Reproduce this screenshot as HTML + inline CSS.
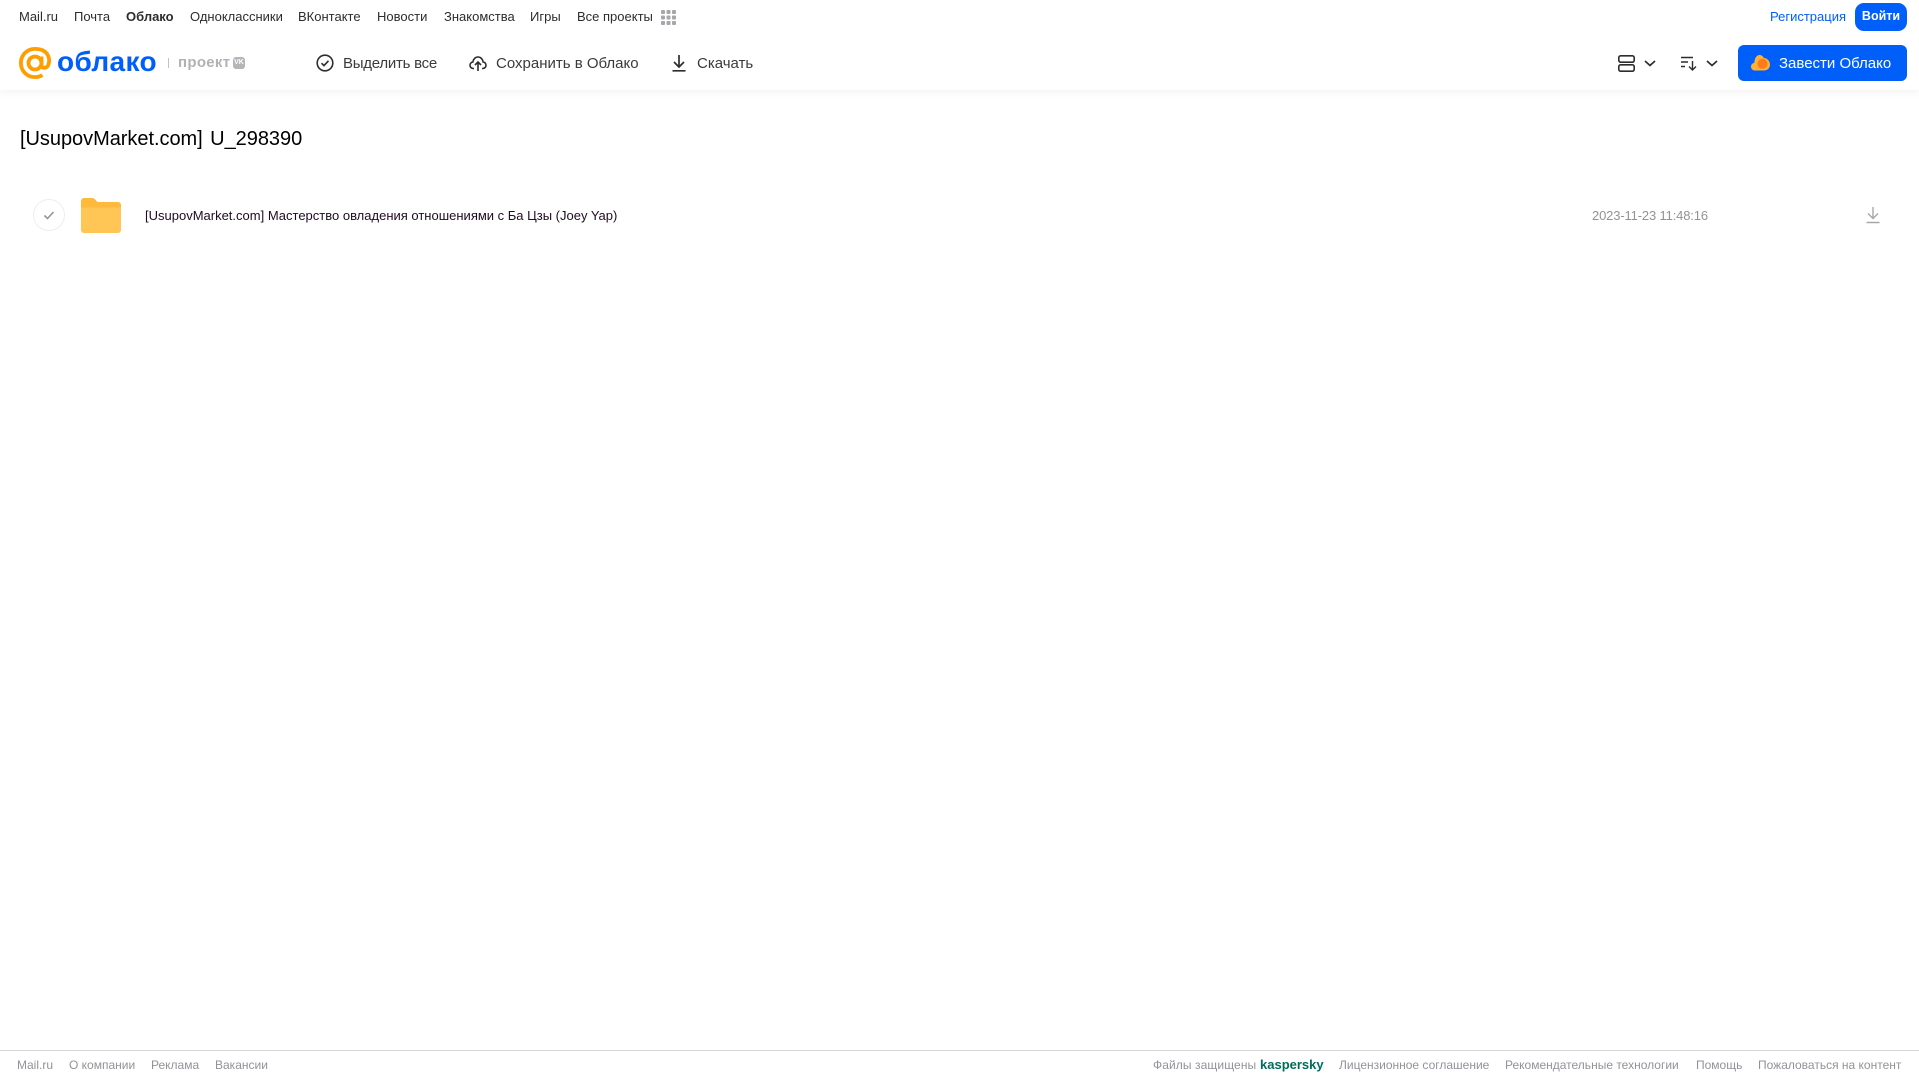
<!DOCTYPE html>
<html lang="ru">
<head>
<meta charset="utf-8">
<title>Облако</title>
<style>
html,body{margin:0;padding:0;background:#fff;width:1919px;height:1079px;overflow:hidden}
body{position:relative;font-family:"Liberation Sans",Arial,sans-serif}
.t{position:absolute;white-space:nowrap;text-decoration:none;line-height:20px;display:block}
.n{font-size:13px;top:7px;color:#2c2d2e}
.a{font-size:15px;top:53.500px;color:#3a3b3c}
.f{font-size:12px;top:1055px;color:#919399}
svg{position:absolute;display:block;overflow:visible}
#hd{position:absolute;left:0;top:0;width:1919px;height:90px;background:#fff;box-shadow:0 2px 8px rgba(0,0,0,.06)}
#ft{position:absolute;left:0;top:1050px;width:1919px;height:1px;background:#d6d6d6}
</style>
</head>
<body>
<div id="hd"></div>

<a class="t n" style="left:19px">Mail.ru</a>
<a class="t n" style="left:74px">Почта</a>
<a class="t n" style="left:126px;font-weight:700">Облако</a>
<a class="t n" style="left:190px">Одноклассники</a>
<a class="t n" style="left:298px">ВКонтакте</a>
<a class="t n" style="left:377px">Новости</a>
<a class="t n" style="left:444px">Знакомства</a>
<a class="t n" style="left:530px">Игры</a>
<a class="t n" style="left:577px">Все проекты</a>
<svg style="left:661px;top:10px" width="15" height="15" fill="#a5a7ab">
<rect x="0" y="0" width="4" height="4" rx="1"/><rect x="5.500" y="0" width="4" height="4" rx="1"/><rect x="11" y="0" width="4" height="4" rx="1"/>
<rect x="0" y="5.500" width="4" height="4" rx="1"/><rect x="5.500" y="5.500" width="4" height="4" rx="1"/><rect x="11" y="5.500" width="4" height="4" rx="1"/>
<rect x="0" y="11" width="4" height="4" rx="1"/><rect x="5.500" y="11" width="4" height="4" rx="1"/><rect x="11" y="11" width="4" height="4" rx="1"/>
</svg>

<a class="t n" style="left:1770px;color:#005ff9">Регистрация</a>
<a class="t n" style="left:1855px;top:3px;width:52px;height:28px;line-height:27px;background:#005ff9;color:#fff;border-radius:9px;text-align:center;font-weight:700;font-size:12.500px">Войти</a>

<svg style="left:19px;top:47px" width="32" height="32" viewBox="0 0 32 32" fill="none" stroke="#ff9e00" stroke-width="3.800">
<circle cx="16" cy="16" r="6.500"/>
<path d="M22.500 9.500V18c0 3.800 5.500 3.800 7-.5 2-6.500-.8-15.600-13.500-15.600C8 1.900 1.900 8 1.900 16S8 30.100 16 30.100c3 0 5.200-.7 7.400-2"/>
</svg>
<div class="t" style="left:57px;top:44px;font-size:28px;line-height:36px;color:#005ff9;font-weight:700;letter-spacing:.35px">облако</div>
<div style="position:absolute;left:168px;top:58px;width:1px;height:10px;background:#c0c1c4"></div>
<div class="t" style="left:178px;top:53px;font-size:15px;color:#b0b2b6;font-weight:700;letter-spacing:.3px">проект</div>
<div class="t" style="left:233px;top:57px;width:12px;height:12px;border-radius:3px;background:#b4b6ba;color:#fff;font-size:7px;line-height:12px;text-align:center;font-weight:700">VK</div>

<svg style="left:316px;top:54px" width="18" height="18" viewBox="0 0 18 18" fill="none" stroke="#2c2d2e" stroke-width="1.600">
<circle cx="9" cy="9" r="7.800"/><path d="M5.500 9.200l2.500 2.400 4.500-4.800"/>
</svg>
<a class="t a" style="left:343px;letter-spacing:-.25px">Выделить все</a>

<svg style="left:469px;top:54px" width="18" height="18" viewBox="0 0 18 18" fill="none" stroke="#2c2d2e" stroke-width="1.600">
<path d="M5 14.500H4.300C2.400 14.500 1 13 1 11.200c0-1.700 1.200-3 2.900-3.300C4.300 5 6.400 3 9 3s4.700 2 5.100 4.900c1.700.3 2.900 1.600 2.900 3.300 0 1.800-1.400 3.300-3.300 3.300H13"/>
<path d="M9 17V8.500M6 11l3-3 3 3"/>
</svg>
<a class="t a" style="left:496px">Сохранить в Облако</a>

<svg style="left:671px;top:54px" width="16" height="18" viewBox="0 0 16 18" fill="none" stroke="#2c2d2e" stroke-width="1.700">
<path d="M8 1v11.500M3 8l5 5 5-5M1.500 16.800h13"/>
</svg>
<a class="t a" style="left:697px">Скачать</a>

<svg style="left:1618px;top:55px" width="17" height="17" viewBox="0 0 17 17" fill="none" stroke="#2c2d2e" stroke-width="1.600">
<rect x=".8" y=".8" width="15.400" height="6.400" rx="1.800"/><rect x=".8" y="9.800" width="15.400" height="6.400" rx="1.800"/>
</svg>
<svg style="left:1644px;top:60px" width="12" height="7" viewBox="0 0 12 7" fill="none" stroke="#2c2d2e" stroke-width="1.700"><path d="M1 1l5 4.500L11 1"/></svg>
<svg style="left:1681px;top:56px" width="16" height="15" viewBox="0 0 16 15" fill="none" stroke="#2c2d2e" stroke-width="1.400">
<path d="M0 1.500h12M0 6h7M0 10.500h4M11.500 5v8.500M8 10.500l3.500 3.500 3.500-3.500"/>
</svg>
<svg style="left:1706px;top:60px" width="12" height="7" viewBox="0 0 12 7" fill="none" stroke="#2c2d2e" stroke-width="1.700"><path d="M1 1l5 4.500L11 1"/></svg>

<a class="t" style="left:1738px;top:45px;width:169px;height:36px;background:#005ff9;border-radius:6px"></a>
<svg style="left:1751px;top:54px" width="19" height="17" viewBox="0 0 19 17">
<path d="M4 16.500C1.800 16.500 0 14.800 0 12.600c0-2 1.500-3.600 3.400-3.900C3.500 4.500 5.500 1 8.500 1c2 0 3.500 1.200 4.300 3C16 4 19 7 19 10.500c0 3.500-2.500 6-6 6z" fill="#ffb133"/>
<circle cx="11.500" cy="9.800" r="5" fill="#ff7a1a"/>
</svg>
<div class="t" style="left:1779px;top:53.500px;font-size:15px;color:#fff">Завести Облако</div>

<h1 class="t" style="left:20px;top:126px;margin:0;font-size:20px;line-height:26px;font-weight:400;color:#000;word-spacing:2px;letter-spacing:-.04px">[UsupovMarket.com] U_298390</h1>

<svg style="left:33px;top:199px" width="32" height="32" viewBox="0 0 32 32" fill="none">
<circle cx="16" cy="16" r="15.500" stroke="#eeeeef"/>
<path d="M11.500 16.500l3 3 6-6.500" stroke="#939598" stroke-width="1.600"/>
</svg>
<svg style="left:81px;top:198px" width="40" height="35" viewBox="0 0 40 35">
<path d="M0 3a3 3 0 0 1 3-3h8c2 0 3 1 4 2.500S17 4 19 4h18a3 3 0 0 1 3 3v4H0z" fill="#ffb93c"/>
<path d="M0 9.500h40V32a3 3 0 0 1-3 3H3a3 3 0 0 1-3-3z" fill="#ffc655"/>
</svg>
<a class="t" style="left:145px;top:206px;font-size:13px;color:#220a24">[UsupovMarket.com] Мастерство овладения отношениями с Ба Цзы (Joey Yap)</a>
<div class="t" style="left:1592px;top:206px;font-size:13px;color:#919399;letter-spacing:-.15px">2023-11-23 11:48:16</div>
<svg style="left:1866px;top:206px" width="14" height="18" viewBox="0 0 14 18" fill="none" stroke="#a5a7ab" stroke-width="1.400">
<path d="M7 1v11M2 7.500l5 5 5-5M.5 16.500h13"/>
</svg>

<div id="ft"></div>
<a class="t f" style="left:17px">Mail.ru</a>
<a class="t f" style="left:69px">О компании</a>
<a class="t f" style="left:151px">Реклама</a>
<a class="t f" style="left:215px">Вакансии</a>
<div class="t f" style="left:1153px;letter-spacing:.1px">Файлы защищены</div>
<div class="t f" style="left:1260px;top:1054.500px;font-size:13px;font-weight:700;color:#006d5c">kaspersky</div>
<a class="t f" style="left:1339px">Лицензионное соглашение</a>
<a class="t f" style="left:1505px">Рекомендательные технологии</a>
<a class="t f" style="left:1696px">Помощь</a>
<a class="t f" style="left:1758px">Пожаловаться на контент</a>
</body>
</html>
